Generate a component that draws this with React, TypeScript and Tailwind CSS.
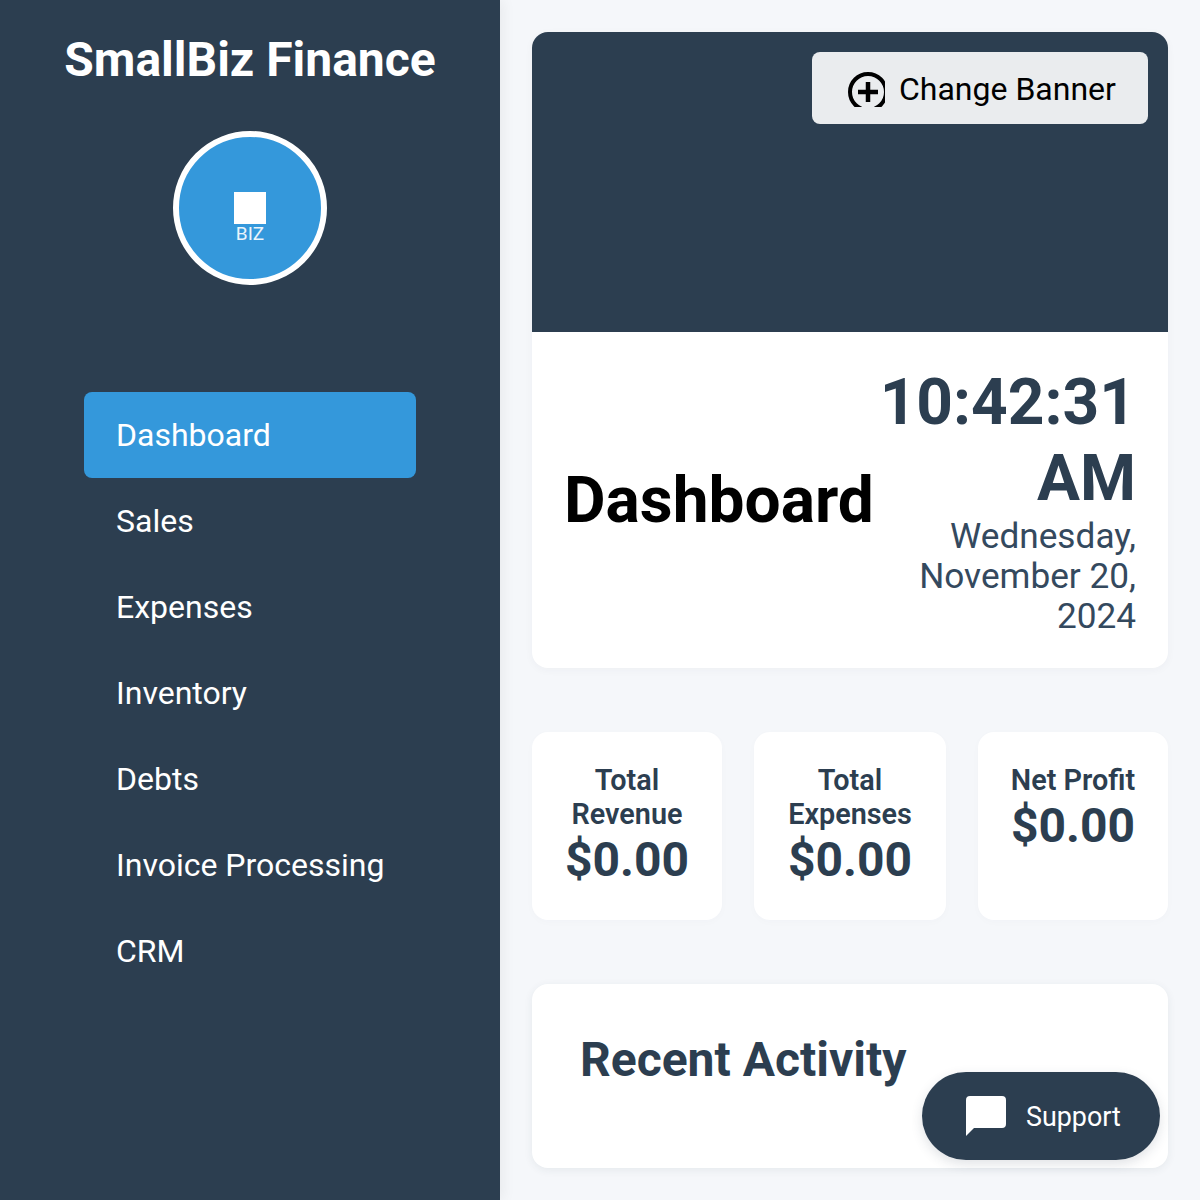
const NAV_ITEMS = ["Dashboard", "Sales", "Expenses", "Inventory", "Debts", "Invoice Processing", "CRM"];

const STATS = [
  { label: "Total Revenue", value: "$0.00" },
  { label: "Total Expenses", value: "$0.00" },
  { label: "Net Profit", value: "$0.00" },
];

function AddCircleIcon() {
  // the source icon is cut off at its lower right, so the box is tighter than the circle
  return (
    <svg width="37" height="35" viewBox="0 0 37 35" className="mt-[2px] shrink-0" aria-hidden>
      <circle cx="20" cy="20" r="18" fill="none" stroke="#000" strokeWidth="4" />
      <path d="M20 10v20M10 20h20" stroke="#000" strokeWidth="4.5" fill="none" />
    </svg>
  );
}

function ChatIcon() {
  return (
    <svg width="40" height="40" viewBox="0 0 40 40" className="shrink-0" aria-hidden>
      <path
        d="M4 0h32a4 4 0 0 1 4 4v24a4 4 0 0 1-4 4H8l-8 8V4a4 4 0 0 1 4-4z"
        fill="#fff"
      />
    </svg>
  );
}

export default function App() {
  return (
    <div className="flex h-screen overflow-hidden bg-[#f5f7fa] font-['Roboto',sans-serif]">
      {/* Sidebar */}
      <aside className="relative z-10 flex w-[500px] shrink-0 flex-col items-center bg-[#2c3e50] pt-[32px] text-white shadow-[4px_0_12px_rgba(0,0,0,0.05)]">
        <h2 className="text-[48px] font-bold leading-[56px]">SmallBiz Finance</h2>
        <div className="mt-[43px] flex h-[154px] w-[154px] flex-col items-center justify-center rounded-full border-[6px] border-white bg-[#3498db] pt-[18px]">
          <div className="h-[32px] w-[32px] bg-white" />
          <span className="pt-[1px] text-[19px] leading-[18px] text-white/90">BIZ</span>
        </div>
        <nav className="mt-[107px] flex w-[332px] flex-col">
          {NAV_ITEMS.map((item, i) => (
            <a
              key={item}
              className={
                i === 0
                  ? "flex h-[86px] items-center whitespace-nowrap rounded-[8px] bg-[#3498db] px-[32px] text-[32px] text-white"
                  : "flex h-[86px] items-center whitespace-nowrap rounded-[8px] px-[32px] text-[32px] text-white"
              }
            >
              {item}
            </a>
          ))}
        </nav>
      </aside>

      {/* Main content */}
      <main className="relative flex flex-1 flex-col px-[32px] pt-[32px]">
        <section className="overflow-hidden rounded-[16px] bg-white shadow-[0_2px_8px_rgba(44,62,80,0.04)]">
          <div className="relative h-[300px] bg-[#2c3e50]">
            <button
              type="button"
              className="absolute right-[20px] top-[20px] flex h-[72px] w-[336px] items-center gap-[14px] rounded-[8px] bg-white/90 pl-[36px] pt-[1px] text-[32px] text-black"
            >
              <AddCircleIcon />
              Change Banner
            </button>
          </div>
          <div className="flex h-[336px] items-center justify-between px-[32px] pt-[2px]">
            <h1 className="text-[64px] font-bold leading-[76px] text-black">Dashboard</h1>
            <div className="mb-[2px] w-[260px] text-right text-[#2c3e50]">
              <div className="text-[64px] font-bold leading-[76px]">10:42:31 AM</div>
              <div className="-mt-[1px] text-[35.2px] leading-[40px] text-[#34495e]">Wednesday, November 20, 2024</div>
            </div>
          </div>
        </section>

        <section className="mt-[64px] grid grid-cols-[190px_192px_190px] gap-[32px]">
          {STATS.map((stat) => (
            <div
              key={stat.label}
              className="h-[188px] rounded-[16px] bg-white px-[32px] pt-[31px] text-center text-[#2c3e50] shadow-[0_2px_8px_rgba(44,62,80,0.02)]"
            >
              <div className="text-[28.8px] font-semibold leading-[34px]">{stat.label}</div>
              <div className="text-[48px] font-bold leading-[58px]">{stat.value}</div>
            </div>
          ))}
        </section>

        <section className="mt-[64px] h-[184px] rounded-[16px] bg-white px-[48px] pt-[48px] shadow-[0_2px_8px_rgba(44,62,80,0.08)]">
          <h2 className="text-[48px] font-bold leading-[56px] text-[#2c3e50]">Recent Activity</h2>
        </section>

        <button
          type="button"
          className="absolute bottom-[40px] right-[40px] flex h-[88px] w-[238px] items-center gap-[20px] rounded-full bg-[#2c3e50] pl-[44px] text-[26.88px] text-white shadow-[0_4px_12px_rgba(44,62,80,0.15)]"
        >
          <ChatIcon />
          <span className="pt-[2px]">Support</span>
        </button>
      </main>
    </div>
  );
}
